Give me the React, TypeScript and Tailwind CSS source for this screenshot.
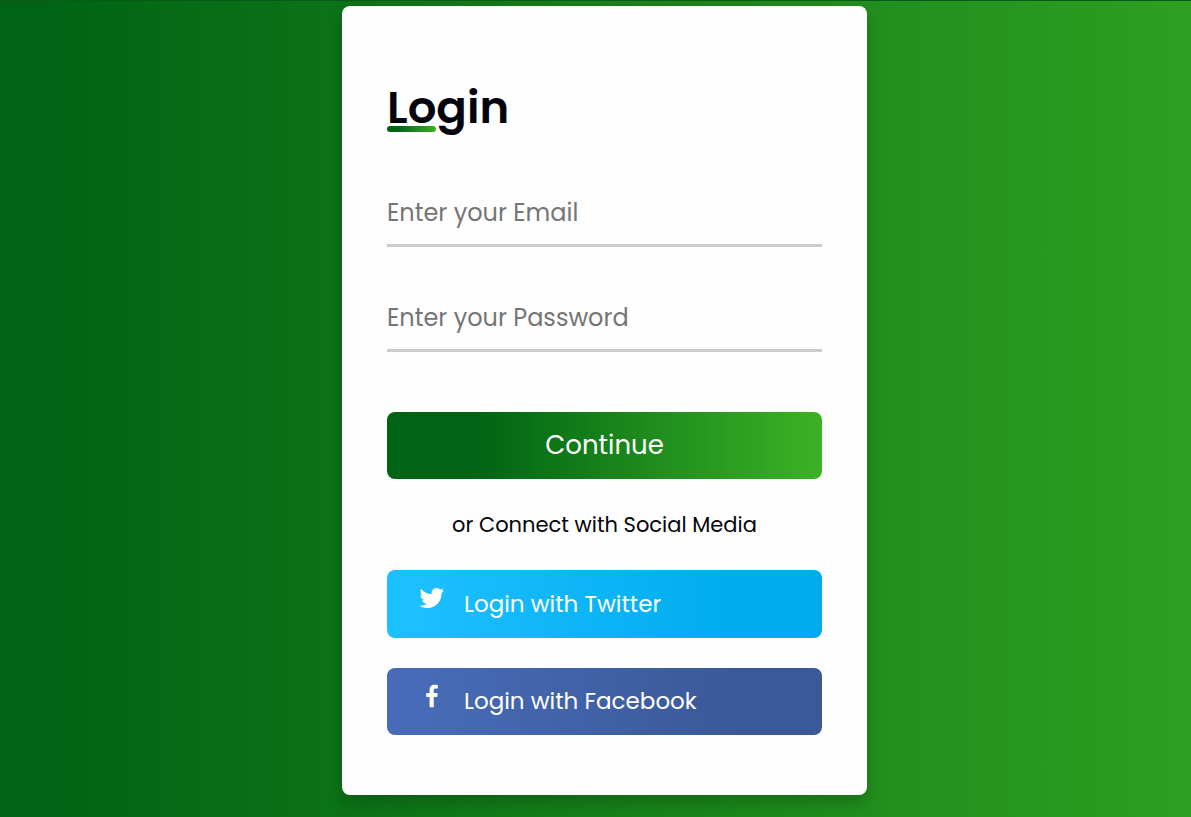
import { BiLogoFacebook, BiLogoTwitter } from "react-icons/bi";

const socials = [
  {
    name: "Twitter",
    Icon: BiLogoTwitter,
    look: "h-[68px] bg-[linear-gradient(90deg,#1cbfff_8%,#00acee_80%)]",
  },
  {
    name: "Facebook",
    Icon: BiLogoFacebook,
    look: "h-[67px] bg-[linear-gradient(90deg,#476bb8_8%,#3b5998_80%)]",
  },
];

const fields = [
  { id: "email", type: "email", label: "Enter your Email" },
  { id: "password", type: "password", label: "Enter your Password" },
];

export default function App() {
  return (
    <main className="flex min-h-screen items-start justify-center border-t border-[#075a18] bg-[linear-gradient(90deg,#006414_4%,#2e9f20_100%)] pt-[5px] pb-[22px] pl-[18px] font-['Poppins','Inter',sans-serif]">
      <form
        className="flex w-full max-w-[525px] flex-col rounded-lg bg-[#fefefe] px-[45px] pt-[68px] pb-[60px] shadow-[0_8px_15px_rgba(0,0,0,0.2)]"
        onSubmit={(event) => event.preventDefault()}
      >
        <h1 className="relative self-start text-[45px] leading-[68px] font-semibold text-[#04040c]">
          Login
          <span className="absolute bottom-[10px] left-0 h-[6px] w-[49px] rounded-full bg-[linear-gradient(90deg,#006414_20%,#3bb025_100%)]" />
        </h1>

        <div className="mt-[38px] flex flex-col gap-[38px]">
          {fields.map(({ id, type, label }) => (
            <input
              key={id}
              id={id}
              type={type}
              aria-label={label}
              placeholder={label}
              className="h-[67px] w-full border-b-[3px] border-[#cccccc] bg-transparent text-2xl text-[#04040c] outline-none placeholder:text-[#757575]"
            />
          ))}
        </div>

        <button
          type="submit"
          className="mt-[60px] h-[67px] rounded-lg bg-[linear-gradient(90deg,#006414_20%,#3bb025_98%)] text-[26px] text-white"
        >
          Continue
        </button>

        <p className="my-[30px] text-center text-[21px] leading-[31px] text-[#04040c]">
          or Connect with Social Media
        </p>

        <div className="flex flex-col gap-[30px]">
          {socials.map(({ name, Icon, look }) => (
            <button
              key={name}
              type="button"
              className={`flex items-center rounded-lg pl-[30px] text-[23px] text-white ${look}`}
            >
              <Icon className="mr-[17px] mb-[12px] size-[30px]" aria-hidden="true" />
              Login with {name}
            </button>
          ))}
        </div>
      </form>
    </main>
  );
}
